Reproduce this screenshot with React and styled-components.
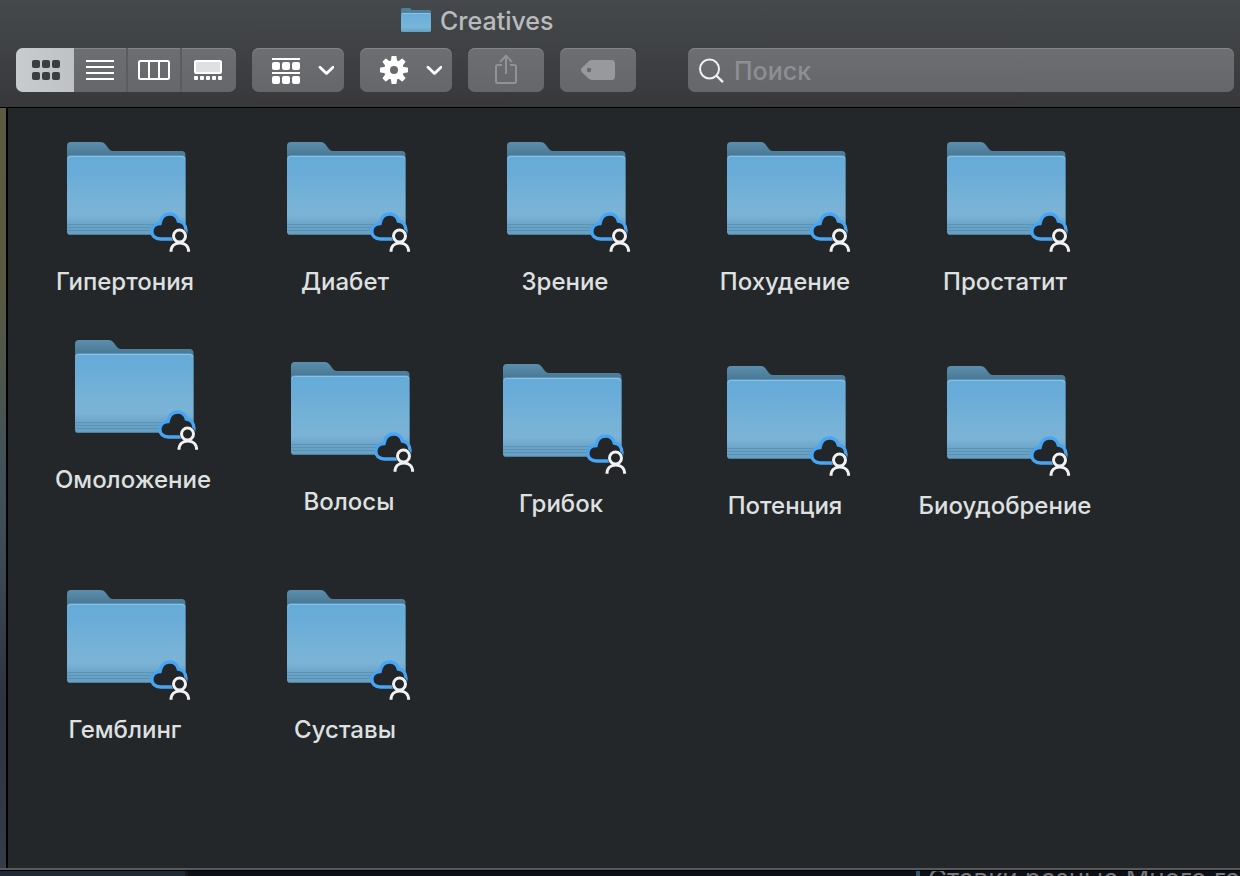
import styled, { createGlobalStyle, css } from "styled-components";

const folders = [
  { name: "Гипертония", x: 7, y: 26 },
  { name: "Диабет", x: 227, y: 26 },
  { name: "Зрение", x: 447, y: 26 },
  { name: "Похудение", x: 667, y: 26 },
  { name: "Простатит", x: 887, y: 26 },
  { name: "Омоложение", x: 15, y: 224 },
  { name: "Волосы", x: 231, y: 246 },
  { name: "Грибок", x: 443, y: 248 },
  { name: "Потенция", x: 667, y: 250 },
  { name: "Биоудобрение", x: 887, y: 250 },
  { name: "Гемблинг", x: 7, y: 474 },
  { name: "Суставы", x: 227, y: 474 },
];

const toothAngles = [0, 45, 90, 135, 180, 225, 270, 315];

const GridIcon = () => (
  <svg width="28" height="20" fill="currentColor">
    {[0, 12].map((y) =>
      [0, 10, 20].map((x) => (
        <rect key={`${x}-${y}`} x={x} y={y} width="8" height="8" rx="2" />
      ))
    )}
  </svg>
);

const ListIcon = () => (
  <svg width="28" height="20" fill="currentColor">
    {[0, 6, 12, 18].map((y) => (
      <rect key={y} y={y} width="28" height="2" />
    ))}
  </svg>
);

const ColumnsIcon = () => (
  <svg width="32" height="20" fill="none" stroke="currentColor" strokeWidth="2">
    <rect x="1" y="1" width="30" height="18" rx="1.5" />
    <path d="M11 1v18M21 1v18" />
  </svg>
);

const GalleryIcon = () => (
  <svg width="28" height="20" fill="currentColor">
    <rect
      x="1"
      y="1"
      width="26"
      height="12"
      rx="1"
      fill="#dfe0e3"
      stroke="currentColor"
      strokeWidth="2"
    />
    {[0, 6, 12, 18, 24].map((x) => (
      <rect key={x} x={x} y="16" width="4" height="4" rx="1" />
    ))}
  </svg>
);

const GroupIcon = () => (
  <svg width="28" height="28" fill="currentColor">
    {[1, 15].map((y) => (
      <g key={y}>
        <rect y={y + 1} width="28" height="2" />
        {[0, 10, 20].map((x) => (
          <rect key={x} x={x} y={y + 5} width="8" height="8" rx="2" />
        ))}
      </g>
    ))}
  </svg>
);

const GearIcon = () => (
  <svg width="28" height="28" viewBox="-14 -14 28 28">
    <circle r="7" fill="none" stroke="currentColor" strokeWidth="6" />
    {toothAngles.map((angle) => (
      <path
        key={angle}
        d="M-3.2 -8.5L-2.5 -13.4Q-2.4 -14 -1.8 -14H1.8Q2.4 -14 2.5 -13.4L3.2 -8.5Z"
        fill="currentColor"
        transform={`rotate(${angle})`}
      />
    ))}
  </svg>
);

const ChevronIcon = () => (
  <svg
    width="16"
    height="10"
    fill="none"
    stroke="currentColor"
    strokeWidth="2.8"
    strokeLinecap="round"
    strokeLinejoin="round"
  >
    <path d="M2 2.2L8.5 8.400L15 2.2" />
  </svg>
);

const ShareIcon = () => (
  <svg width="22" height="32" fill="none" stroke="#909295" strokeWidth="2">
    <path d="M7 11H2.5Q1 11 1 12.5V27.500Q1 29 2.500 29H19.500Q21 29 21 27.500V12.500Q21 11 19.500 11H15" />
    <path d="M11 20V2M5 8L11 1.700L17 8" />
  </svg>
);

const TagIcon = () => (
  <svg width="34" height="20">
    <path
      d="M11 0H30.500Q34 0 34 3.500V16.500Q34 20 30.500 20H11Q9 20 7.500 18.600L1.200 12.600Q-1.200 10 1.200 7.400L7.500 1.400Q9 0 11 0Z"
      fill="#97999c"
    />
    <circle cx="8" cy="10" r="2.2" fill="#66686b" />
  </svg>
);

const SearchIcon = () => (
  <svg width="26" height="26" fill="none" stroke="#f0f0f0" strokeWidth="2">
    <circle cx="11.500" cy="12" r="9.5" />
    <path d="M18.200 18.500L25 25.200" strokeWidth="2.4" />
  </svg>
);

const TitleFolder = () => (
  <svg width="32" height="24">
    <defs>
      <linearGradient id="small" x1="0" y1="0" x2="0" y2="1">
        <stop offset="0" stopColor="#68add9" />
        <stop offset="0.75" stopColor="#79b5da" />
        <stop offset="1" stopColor="#659fbf" />
      </linearGradient>
    </defs>
    <path
      d="M1 21V1.500Q1 0 2.500 0H9.500Q10.500 0 11.500 2H29.500Q31 2 31 3.500V21Z"
      fill="#4d8199"
    />
    <rect x="1" y="5" width="30" height="19" rx="1.5" fill="url(#small)" />
    <path d="M2 5.5H30" stroke="#8bc5e9" />
  </svg>
);

const SharedFolder = () => (
  <svg width="136" height="124">
    <defs>
      <linearGradient id="back" x1="0" y1="0" x2="0" y2="1">
        <stop offset="0" stopColor="#5b8fae" />
        <stop offset="0.15" stopColor="#4b7a96" />
        <stop offset="1" stopColor="#4b7a96" />
      </linearGradient>
      <linearGradient id="front" x1="0" y1="0" x2="0" y2="1">
        <stop offset="0" stopColor="#66abd9" />
        <stop offset="0.2" stopColor="#69acd8" />
        <stop offset="0.55" stopColor="#76b2d7" />
        <stop offset="0.75" stopColor="#7ab3d5" />
        <stop offset="0.88" stopColor="#6ba3c6" />
        <stop offset="1" stopColor="#659fc2" />
      </linearGradient>
    </defs>
    <path
      d="M10 90V12Q10 8 14 8H44Q47 8 49 11L51.500 14.500Q53.500 17 56 17H124.500Q128.500 17 128.500 21V90Z"
      fill="url(#back)"
    />
    <rect x="10" y="21.500" width="118.500" height="79.500" rx="3.500" fill="url(#front)" />
    <path d="M11 25Q11 22.500 13.500 22.500H125Q127.500 22.500 127.500 25" fill="none" stroke="#87c2e7" />
    <path d="M10 90.500H128.500M10 93.500H128.500M10 96.500H128.500" stroke="#4f88ab" strokeOpacity="0.6" />
    <path d="M12 100.500H126.500" stroke="#4d809e" />
    <path
      d="M103.500 105C98 105 94.800 101.600 94.800 97.600C94.800 93 98 89.700 103 89.500C104 83.500 107.500 80 112.500 80C117 80 120.500 82.700 121.300 87C126 87.500 129 91.500 129 96.500C129 101.500 126 105 121.500 105Z"
      fill="#232628"
      stroke="#48a5f3"
      strokeWidth="3.4"
    />
    <path d="M112.500 118V116A10 9 0 0 1 133 116V118Z" fill="#232628" />
    <circle cx="122.500" cy="102" r="8" fill="#232628" />
    <circle cx="122.500" cy="102" r="6" fill="none" stroke="#f1f1f1" strokeWidth="3" />
    <path
      d="M114 117.800C114 112 117.500 109 122.800 109S131.600 112 131.600 117.800"
      fill="none"
      stroke="#f1f1f1"
      strokeWidth="3"
    />
  </svg>
);

const App = () => {
  return (
    <Page>
      <GlobalStyle />
      <Header>
        <Title>
          <TitleFolder />
          <h1>Creatives</h1>
        </Title>
        <Toolbar>
          <ViewSwitch>
            <ViewButton $active aria-pressed="true" aria-label="Значки">
              <GridIcon />
            </ViewButton>
            <ViewButton aria-label="Список">
              <ListIcon />
            </ViewButton>
            <ViewButton aria-label="Колонки">
              <ColumnsIcon />
            </ViewButton>
            <ViewButton aria-label="Галерея">
              <GalleryIcon />
            </ViewButton>
          </ViewSwitch>
          <MenuButton aria-label="Группировка">
            <GroupIcon />
            <ChevronIcon />
          </MenuButton>
          <MenuButton aria-label="Действия">
            <GearIcon />
            <ChevronIcon />
          </MenuButton>
          <ToolButton disabled aria-label="Поделиться">
            <ShareIcon />
          </ToolButton>
          <ToolButton disabled aria-label="Теги">
            <TagIcon />
          </ToolButton>
          <SearchField>
            <SearchIcon />
            <input type="search" placeholder="Поиск" aria-label="Поиск" />
          </SearchField>
        </Toolbar>
      </Header>
      <Content>
        <SidebarEdge />
        <Canvas>
          {folders.map(({ name, x, y }) => (
            <Folder key={name} href="#" style={{ left: x, top: y }}>
              <SharedFolder />
              <span>{name}</span>
            </Folder>
          ))}
        </Canvas>
      </Content>
      <Behind>
        <BehindLeft />
        <BehindRight>
          <p>Ставки разные Много ге</p>
        </BehindRight>
      </Behind>
    </Page>
  );
};

const GlobalStyle = createGlobalStyle`
  * {
    box-sizing: border-box;
  }
  body {
    margin: 0;
    background: #0b0e14;
    font-family: Inter, "Noto Sans", sans-serif;
  }
  svg {
    display: block;
    flex-shrink: 0;
  }
`;

const control = css`
  height: 44px;
  border: 0;
  border-radius: 7px;
  color: #fff;
  background: linear-gradient(#6c6e71, #66676a);
  box-shadow: inset 0 1px 0 #838588;
`;

const Page = styled.div`
  display: flex;
  flex-direction: column;
  height: 100vh;
  overflow: hidden;
`;

const Header = styled.header`
  height: 108px;
  flex-shrink: 0;
  background: linear-gradient(#45494b, #38383b);
  border-bottom: 1px solid #000;
`;

const Title = styled.div`
  display: flex;
  align-items: center;
  gap: 8px;
  height: 48px;
  padding: 0 0 8px 400px;
  h1 {
    margin: 0;
    padding-top: 2px;
    font-size: 25px;
    font-weight: 500;
    line-height: 32px;
    color: #b9bbbd;
  }
`;

const Toolbar = styled.div`
  display: flex;
  gap: 16px;
  padding: 0 6px 0 16px;
`;

const ViewSwitch = styled.div`
  ${control};
  display: flex;
  overflow: hidden;
`;

const ViewButton = styled.button`
  display: flex;
  align-items: center;
  justify-content: center;
  width: ${({ $active }) => ($active ? "58px" : "54px")};
  padding: ${({ $active }) => ($active ? "0 0 0 2px" : "0")};
  border: 0;
  border-right: ${({ $active }) => ($active ? "0" : "2px solid #5b5c5f")};
  color: ${({ $active }) => ($active ? "#3b3e40" : "#fff")};
  background: ${({ $active }) =>
    $active ? "linear-gradient(90deg, #c9cccf, #bfc2c5)" : "transparent"};
  &:last-child {
    border-color: transparent;
  }
`;

const MenuButton = styled.button`
  ${control};
  display: flex;
  align-items: center;
  justify-content: space-between;
  width: 92px;
  padding: 0 10px 0 20px;
`;

const ToolButton = styled.button`
  ${control};
  display: flex;
  align-items: center;
  justify-content: center;
  width: 76px;
  padding: 0;
`;

const SearchField = styled.label`
  ${control};
  display: flex;
  align-items: center;
  flex: 1;
  gap: 10px;
  margin-left: 36px;
  padding: 0 10px;
  input {
    flex: 1;
    min-width: 0;
    padding: 2px 0 0;
    border: 0;
    outline: 0;
    background: none;
    color: #fff;
    font: inherit;
    font-size: 25px;
    font-weight: 500;
  }
  input::placeholder {
    color: #8e8f92;
    opacity: 1;
  }
`;

const Content = styled.div`
  display: flex;
  flex: 1;
  min-height: 0;
  border-bottom: 2px solid #57595b;
`;

const SidebarEdge = styled.div`
  width: 8px;
  border-right: 2px solid #000;
  background: linear-gradient(
    #5c5b42,
    #585940 24%,
    #425258 46%,
    #3f4c55 57%,
    #2d333f 78%,
    #343c48
  );
`;

const Canvas = styled.main`
  position: relative;
  flex: 1;
  background: #232729;
`;

const Folder = styled.a`
  position: absolute;
  display: flex;
  flex-direction: column;
  align-items: center;
  width: 220px;
  gap: 8px;
  text-decoration: none;
  color: #dfe0e0;
  font-size: 24px;
  font-weight: 500;
  line-height: 32px;
  text-align: center;
`;

const Behind = styled.footer`
  display: flex;
  height: 6px;
  flex-shrink: 0;
  overflow: hidden;
  border-top: 1px solid #000;
`;

const BehindLeft = styled.div`
  width: 188px;
  background: #202938;
  border-right: 3px solid #16191f;
`;

const BehindRight = styled.div`
  display: flex;
  justify-content: flex-end;
  flex: 1;
  background: #0c0f16;
  p {
    margin: 0;
    height: 32px;
    padding-left: 8px;
    border-left: 4px solid #34536d;
    color: #77797c;
    font-size: 26px;
    line-height: 16px;
    white-space: nowrap;
  }
`;

export default App;
